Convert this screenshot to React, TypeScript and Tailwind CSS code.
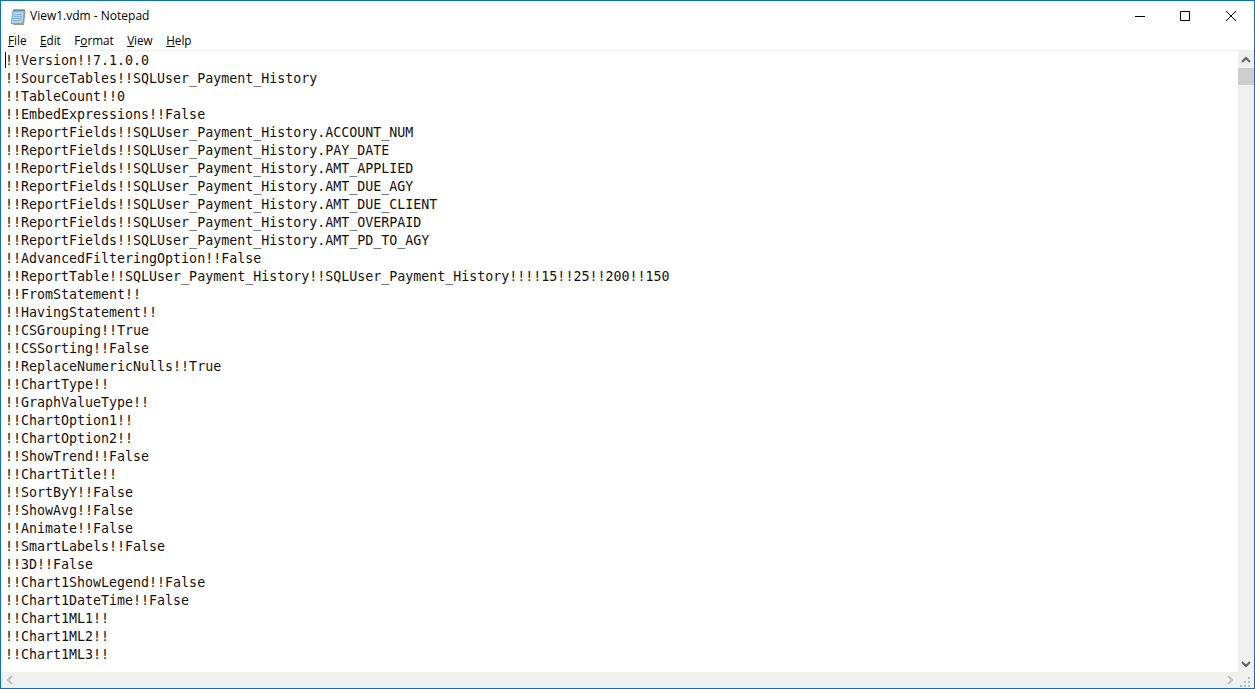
import React from "react";

const lines = [
  "!!Version!!7.1.0.0",
  "!!SourceTables!!SQLUser_Payment_History",
  "!!TableCount!!0",
  "!!EmbedExpressions!!False",
  "!!ReportFields!!SQLUser_Payment_History.ACCOUNT_NUM",
  "!!ReportFields!!SQLUser_Payment_History.PAY_DATE",
  "!!ReportFields!!SQLUser_Payment_History.AMT_APPLIED",
  "!!ReportFields!!SQLUser_Payment_History.AMT_DUE_AGY",
  "!!ReportFields!!SQLUser_Payment_History.AMT_DUE_CLIENT",
  "!!ReportFields!!SQLUser_Payment_History.AMT_OVERPAID",
  "!!ReportFields!!SQLUser_Payment_History.AMT_PD_TO_AGY",
  "!!AdvancedFilteringOption!!False",
  "!!ReportTable!!SQLUser_Payment_History!!SQLUser_Payment_History!!!!15!!25!!200!!150",
  "!!FromStatement!!",
  "!!HavingStatement!!",
  "!!CSGrouping!!True",
  "!!CSSorting!!False",
  "!!ReplaceNumericNulls!!True",
  "!!ChartType!!",
  "!!GraphValueType!!",
  "!!ChartOption1!!",
  "!!ChartOption2!!",
  "!!ShowTrend!!False",
  "!!ChartTitle!!",
  "!!SortByY!!False",
  "!!ShowAvg!!False",
  "!!Animate!!False",
  "!!SmartLabels!!False",
  "!!3D!!False",
  "!!Chart1ShowLegend!!False",
  "!!Chart1DateTime!!False",
  "!!Chart1ML1!!",
  "!!Chart1ML2!!",
  "!!Chart1ML3!!",
];

function NotepadIcon() {
  return (
    <svg width="16" height="16" viewBox="0 0 16 16">
      <path d="M4 3h11.5l-1.5 13H3z" fill="#a89a6a" />
      <path d="M3 1.5h11.5l-1.5 13H1z" fill="#a9d3ee" stroke="#6f9dbd" strokeWidth="0.8" />
      <path d="M3.5 5.5h8.5M3.2 7.5h8.5M3 9.5h8.5M2.8 11.5h8.5" stroke="#7fb1d4" strokeWidth="0.8" />
      <path d="M4 0v2.5M6 0v2.5M8 0v2.5M10 0v2.5M12 0v2.5M14 0v2.5" stroke="#55606a" />
    </svg>
  );
}

function Arrow({ dir, color }: { dir: "up" | "down" | "left" | "right"; color: string }) {
  const d = {
    up: "M1 7 L5 3 L9 7",
    down: "M1 3 L5 7 L9 3",
    left: "M7 1 L3 5 L7 9",
    right: "M3 1 L7 5 L3 9",
  }[dir];
  return (
    <svg width="10" height="10" viewBox="0 0 10 10">
      <path d={d} fill="none" stroke={color} strokeWidth="2" />
    </svg>
  );
}

export default function App() {
  return (
    <div className="w-[1255px] h-[689px] flex flex-col bg-white border border-[#0f6fb8] overflow-hidden">
      {/* Title bar */}
      <div className="h-[30px] flex items-center shrink-0">
        <div className="ml-[9px] mr-[4px] mt-px">
          <NotepadIcon />
        </div>
        <span className="text-[12px] text-black font-['Open_Sans','Liberation_Sans',sans-serif]">View1.vdm - Notepad</span>
        <div className="ml-auto flex h-full">
          <div className="w-[46px] pl-[2px] flex items-center justify-center">
            <svg width="10" height="10" viewBox="0 0 10 10">
              <path d="M0 5.5h10" stroke="#000" fill="none" />
            </svg>
          </div>
          <div className="w-[46px] flex items-center justify-center">
            <svg width="10" height="10" viewBox="0 0 10 10">
              <path d="M.5.5h9v9h-9z" stroke="#000" fill="none" />
            </svg>
          </div>
          <div className="w-[46px] flex items-center justify-center">
            <svg width="10" height="10" viewBox="0 0 10 10">
              <path d="M0 0L10 10M10 0L0 10" stroke="#000" fill="none" />
            </svg>
          </div>
        </div>
      </div>

      {/* Menu */}
      <div className="h-[19px] flex items-center shrink-0 pl-[7px] gap-[13.5px] text-[11.7px] text-black font-['Open_Sans','Liberation_Sans',sans-serif]">
        <span><span className="underline">F</span>ile</span>
        <span><span className="underline">E</span>dit</span>
        <span>F<span className="underline">o</span>rmat</span>
        <span><span className="underline">V</span>iew</span>
        <span><span className="underline">H</span>elp</span>
      </div>

      <div className="h-px bg-[#f0f0f0] shrink-0" />

      {/* Editor */}
      <div className="flex-1 flex min-h-0">
        <div className="flex-1 relative overflow-hidden pl-[4px] pt-px font-['DejaVu_Sans_Mono',monospace] text-[13.3px] leading-[18px] text-[#111] whitespace-pre">
          <div className="absolute left-[4px] top-px w-px h-[16px] bg-black" />
          {lines.map((l, i) => (
            <div key={i}>{l}</div>
          ))}
        </div>
        <div className="w-[16px] bg-[#f0f0f0] flex flex-col items-center shrink-0">
          <div className="h-[17px] flex items-center justify-center">
            <Arrow dir="up" color="#606060" />
          </div>
          <div className="w-full h-[17px] bg-[#cdcdcd]" />
          <div className="flex-1" />
          <div className="h-[17px] flex items-center justify-center">
            <Arrow dir="down" color="#606060" />
          </div>
        </div>
      </div>

      {/* Bottom scrollbar */}
      <div className="h-[16px] flex items-center bg-[#f0f0f0] shrink-0">
        <div className="w-[17px] flex items-center justify-center">
          <Arrow dir="left" color="#c0c0c0" />
        </div>
        <div className="flex-1" />
        <div className="w-[17px] flex items-center justify-center">
          <Arrow dir="right" color="#c0c0c0" />
        </div>
        <div className="w-[16px] h-full flex items-end justify-center">
          <svg width="12" height="12" viewBox="0 0 12 12">
            <path d="M8 1h2v2H8zM4 5h2v2H4zM8 5h2v2H8zM0 9h2v2H0zM4 9h2v2H4zM8 9h2v2H8z" fill="#b8b8b8" />
          </svg>
        </div>
      </div>
    </div>
  );
}
